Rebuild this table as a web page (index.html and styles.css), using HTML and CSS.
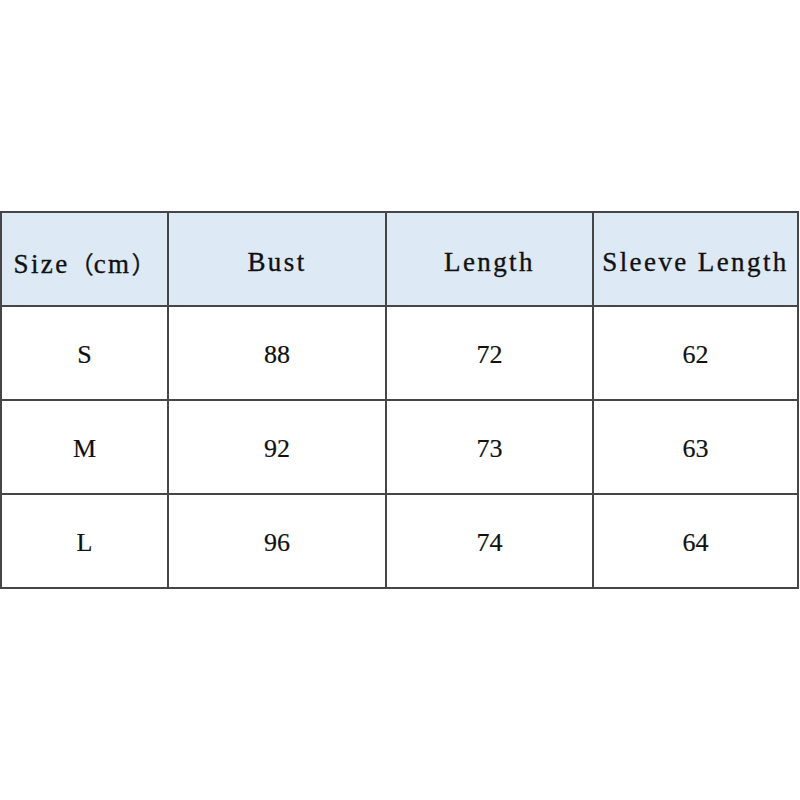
FILE: index.html
```html
<!DOCTYPE html>
<html>
<head>
<meta charset="utf-8">
<link rel="stylesheet" href="styles.css">
</head>
<body>
<div class="page">
  <table class="size-table">
    <colgroup>
      <col class="c1"><col class="c2"><col class="c3"><col class="c4">
    </colgroup>
    <thead>
      <tr>
        <th>Size<span class="cjk">（</span>cm<span class="cjk">）</span></th>
        <th>Bust</th>
        <th>Length</th>
        <th>Sleeve Length</th>
      </tr>
    </thead>
    <tbody>
      <tr><td>S</td><td>88</td><td>72</td><td>62</td></tr>
      <tr><td>M</td><td>92</td><td>73</td><td>63</td></tr>
      <tr><td>L</td><td>96</td><td>74</td><td>64</td></tr>
    </tbody>
  </table>
</div>
</body>
</html>
```

FILE: styles.css
```css
html, body {
  margin: 0;
  padding: 0;
  background: #ffffff;
}

.page {
  width: 800px;
  height: 800px;
  box-sizing: border-box;
  padding: 0 3px 0 0;
  display: flex;
  align-items: center;
}

.size-table {
  width: 797px;
  border-collapse: collapse;
  table-layout: fixed;
  color: #111;
}

.c1 { width: 167px; }
.c2 { width: 218px; }
.c3 { width: 207px; }
.c4 { width: 205px; }

.size-table th,
.size-table td {
  border: 2px solid #464646;
  text-align: center;
  vertical-align: middle;
  padding: 0;
  height: 92px;
}

.size-table th {
  background: #dde9f5;
  font-family: "Liberation Serif", "Noto Sans CJK SC", serif;
  font-weight: normal;
  font-size: 27px;
  letter-spacing: 2.4px;
  padding-top: 6px;
  height: 86px;
  -webkit-text-stroke: 0.35px #111;
}

.cjk {
  font-family: "Noto Sans CJK SC", sans-serif;
  font-size: 24px;
  letter-spacing: 0;
}

.size-table td {
  font-family: "Liberation Serif", serif;
  font-size: 26px;
  padding-top: 3px;
  height: 89px;
  -webkit-text-stroke: 0.2px #111;
}
```
